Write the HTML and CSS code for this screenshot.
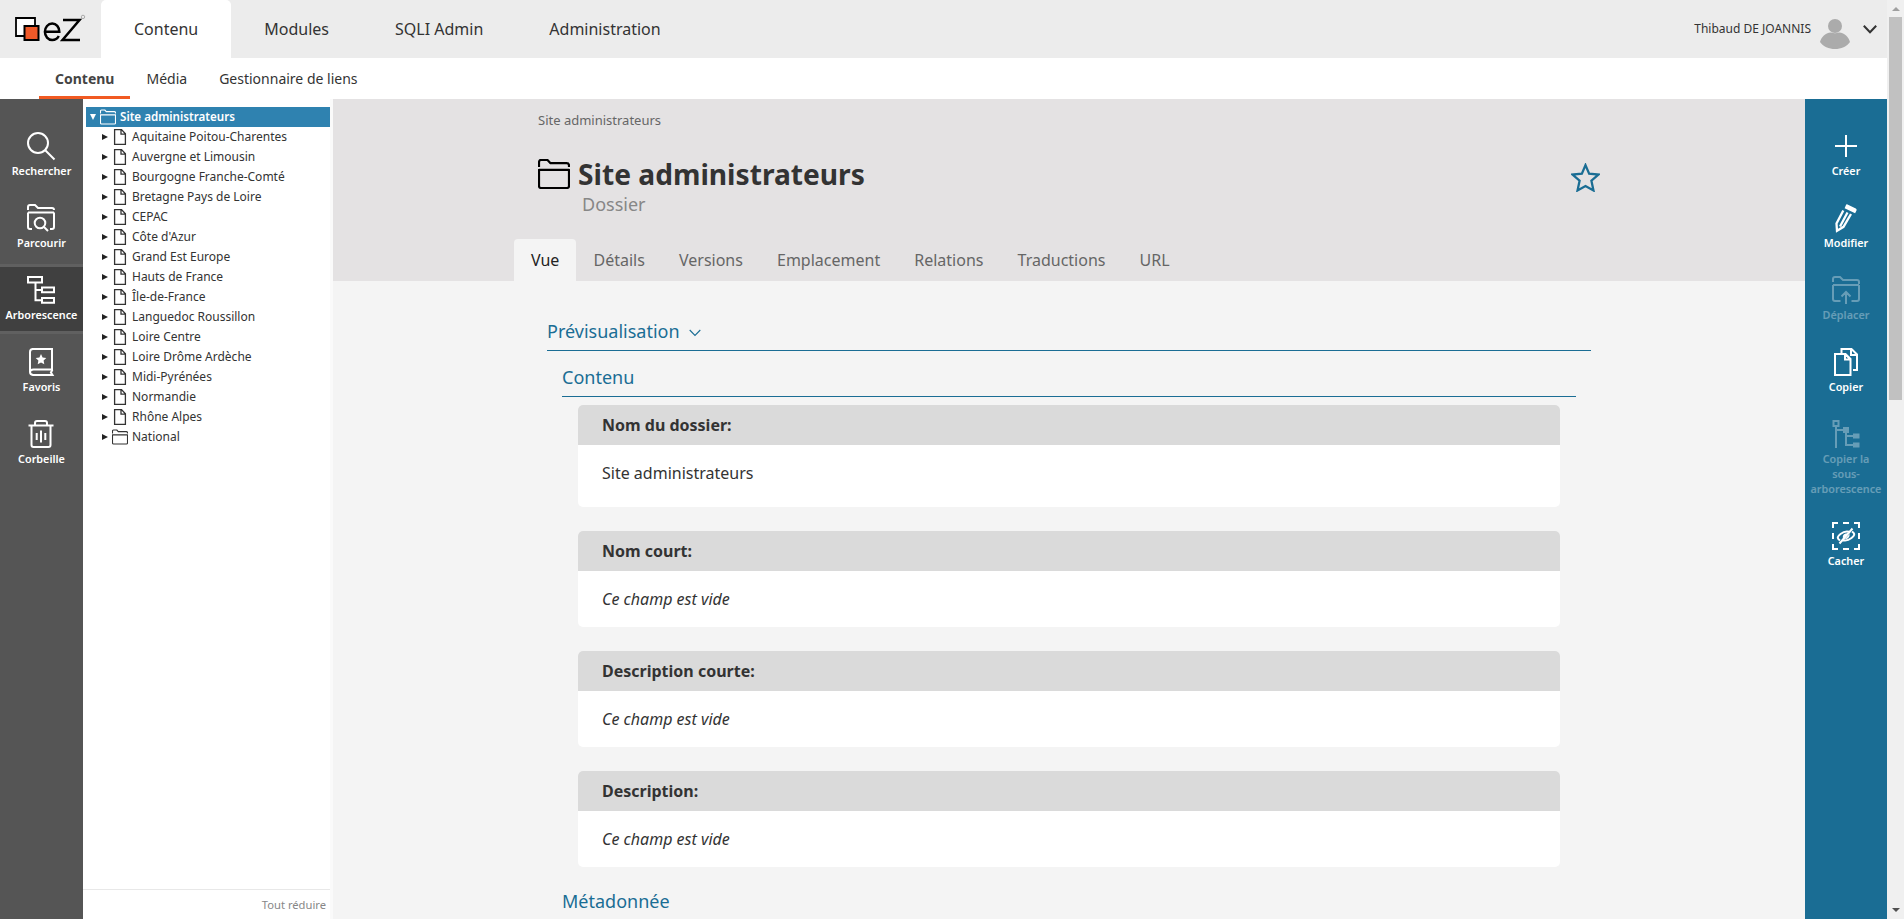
FILE: index.html
```html
<!DOCTYPE html>
<html lang="fr">
<head>
<meta charset="utf-8">
<title>Site administrateurs</title>
<link rel="stylesheet" href="styles.css">
</head>
<body>
<svg class="defs" aria-hidden="true">
  <symbol id="file" viewBox="0 0 12 16"><path d="M.6.6h6.900l3.900 4.100v10.700H.6zM7 .9v4.300h4.200" fill="none" stroke="currentColor" stroke-width="1.300"/></symbol>
  <symbol id="folder" viewBox="0 0 32 30"><path d="M1 8V3.500Q1 1 3 1h6.500l3 3.200H28.500Q31 4.200 31 6.500V8M1 10.800h30V27q0 2-2 2H3q-2 0-2-2z" fill="none" stroke="currentColor" stroke-width="2.200" stroke-linejoin="round"/></symbol>
</svg>
<div class="app">
  <div class="page">
    <header class="topbar">
      <svg class="logo" viewBox="0 0 72 30">
        <path d="M1 3h19v18H1z" fill="#fff" stroke="#000" stroke-width="1.800"/>
        <path d="M9.500 11h14v14H9.500z" fill="#f15a29" stroke="#000" stroke-width="2"/>
        <path d="M30 16.800h14.300c0-4.700-3-8.200-7.100-8.200s-7.300 3.600-7.300 8.200 3.200 8.200 7.300 8.200c3.100 0 5.300-1.500 6.600-4M48 5h16.500L47.500 25H65" fill="none" stroke="#000" stroke-width="2.500"/>
        <circle cx="68" cy="1.900" r="1.700" fill="none" stroke="#999" stroke-width=".8"/>
      </svg>
      <nav class="mainnav">
        <a class="on">Contenu</a><a>Modules</a><a>SQLI Admin</a><a>Administration</a>
      </nav>
      <div class="user">
        <span>Thibaud DE JOANNIS</span>
        <svg class="avatar" viewBox="0 0 30 30"><circle cx="15" cy="7" r="7" fill="#ababab"/><path d="M0 23c1-4 5-9.500 11-9.500q4 1.400 8 0c6 0 10 5.500 11 9.500-3 4.500-9 7-15 7S3 27.500 0 23z" fill="#ababab"/></svg>
        <svg class="chev" viewBox="0 0 14 9"><path d="M.8.8 7 7.300 13.200.8" fill="none" stroke="#333" stroke-width="2"/></svg>
      </div>
    </header>
    <nav class="subnav"><a class="on">Contenu</a><a>Média</a><a>Gestionnaire de liens</a></nav>
    <div class="columns">
      <aside class="side left">
        <a><svg viewBox="0 0 28 28"><circle cx="11" cy="11" r="10"/><path d="m18 18 9.500 9.500"/></svg>Rechercher</a>
        <a><svg viewBox="0 0 28 28"><path d="M1 6V3q0-2 2-2h5l3 3h14q2 0 2 2M1 8.500h26M5 25H3q-2 0-2-2V8.500M27 8.500V23q0 2-2 2h-2"/><circle cx="13" cy="19" r="5.300"/><path d="m17 23 4 4"/></svg>Parcourir</a>
        <a class="active"><svg viewBox="0 0 28 28"><path d="M1 1h14v5.500H1zM15 11.500h12v4.700H15zM15 22h12v4.700H15zM8.500 6.500v17.700H15M8.500 14H15"/></svg>Arborescence</a>
        <a><svg viewBox="0 0 28 28"><path d="M5 1h20v20.500H6.500Q3 21.500 3 24t3 3h19.500l-1.600-2.600 1.600-2.600M3 24V4q0-3 3-3"/><path class="solid" d="m14 6 1.600 3.400 3.700.5-2.700 2.600.7 3.700-3.300-1.800-3.300 1.800.7-3.700-2.700-2.600 3.700-.5z"/></svg>Favoris</a>
        <a><svg viewBox="0 0 28 28"><path d="M1.500 5.500h25M8 5V3q0-2 2-2h8q2 0 2 2v2M4.500 6v19q0 2 2 2h15q2 0 2-2V6M9.700 13v7M14 10.500v12M18.300 13v7"/></svg>Corbeille</a>
      </aside>
      <aside class="tree">
        <div class="root"><i class="down"></i><svg><use href="#folder"/></svg><span>Site administrateurs</span></div>
        <div class="node"><i></i><svg><use href="#file"/></svg><span>Aquitaine Poitou-Charentes</span></div>
        <div class="node"><i></i><svg><use href="#file"/></svg><span>Auvergne et Limousin</span></div>
        <div class="node"><i></i><svg><use href="#file"/></svg><span>Bourgogne Franche-Comté</span></div>
        <div class="node"><i></i><svg><use href="#file"/></svg><span>Bretagne Pays de Loire</span></div>
        <div class="node"><i></i><svg><use href="#file"/></svg><span>CEPAC</span></div>
        <div class="node"><i></i><svg><use href="#file"/></svg><span>Côte d'Azur</span></div>
        <div class="node"><i></i><svg><use href="#file"/></svg><span>Grand Est Europe</span></div>
        <div class="node"><i></i><svg><use href="#file"/></svg><span>Hauts de France</span></div>
        <div class="node"><i></i><svg><use href="#file"/></svg><span>Île-de-France</span></div>
        <div class="node"><i></i><svg><use href="#file"/></svg><span>Languedoc Roussillon</span></div>
        <div class="node"><i></i><svg><use href="#file"/></svg><span>Loire Centre</span></div>
        <div class="node"><i></i><svg><use href="#file"/></svg><span>Loire Drôme Ardèche</span></div>
        <div class="node"><i></i><svg><use href="#file"/></svg><span>Midi-Pyrénées</span></div>
        <div class="node"><i></i><svg><use href="#file"/></svg><span>Normandie</span></div>
        <div class="node"><i></i><svg><use href="#file"/></svg><span>Rhône Alpes</span></div>
        <div class="node"><i></i><svg><use href="#folder"/></svg><span>National</span></div>
        <div class="collapse">Tout réduire</div>
      </aside>
      <main>
        <div class="hero">
          <div class="crumb">Site administrateurs</div>
          <div class="heading">
            <svg class="bigfolder"><use href="#folder"/></svg>
            <h1>Site administrateurs</h1>
            <svg class="star" viewBox="0 0 28 28"><path d="m14 2 3.500 8.300 9 .8-6.800 6 2 9.400L14 22.200l-7.700 4.300 2-9.400-6.800-6 9-.8z" fill="none" stroke="#1a6d94" stroke-width="2.200"/></svg>
          </div>
          <div class="type">Dossier</div>
          <nav class="tabs"><a class="on">Vue</a><a>Détails</a><a>Versions</a><a>Emplacement</a><a>Relations</a><a>Traductions</a><a>URL</a></nav>
        </div>
        <div class="content">
          <h2>Prévisualisation <svg viewBox="0 0 12 8"><path d="m.7 1 5.300 5.500L11.300 1" fill="none" stroke="#1a6d94" stroke-width="1.100"/></svg></h2>
          <h3>Contenu</h3>
          <section class="card first"><h4>Nom du dossier:</h4><p>Site administrateurs</p></section>
          <section class="card"><h4>Nom court:</h4><p><em>Ce champ est vide</em></p></section>
          <section class="card"><h4>Description courte:</h4><p><em>Ce champ est vide</em></p></section>
          <section class="card"><h4>Description:</h4><p><em>Ce champ est vide</em></p></section>
          <h3 class="meta">Métadonnée</h3>
        </div>
      </main>
      <aside class="side right">
        <a><svg viewBox="0 0 28 28"><path d="M14 3v22M3 14h22"/></svg>Créer</a>
        <a><svg viewBox="0 0 28 28"><path class="solid" d="m15 .3 8.800 4.200q1.200.6.700 1.900l-1.400 2.800-10.500-5L14 1q.3-.9 1-.7z"/><path d="M11.300 6.500 4.500 19.500 5 26.800l6.500-4L19 10M15.500 8.500 8 22.500" stroke-width="2.300"/></svg>Modifier</a>
        <a class="off"><svg viewBox="0 0 28 28"><path d="M1 6V3q0-2 2-2h5l3 3h14q2 0 2 2v2M1 9h26M8.500 25H3q-2 0-2-2V9M27 9v14q0 2-2 2h-5.500M14 28V16.500M9.500 20.500l4.500-4.500 4.500 4.500"/></svg>Déplacer</a>
        <a><svg viewBox="0 0 28 28"><path d="M3 6h10.500l5 5v16H3zM13 6v5.500h5.500M9.500 6V1h10l5.500 5.500V22h-4M19 1v6h6M13 6l5.500 5.500"/></svg>Copier</a>
        <a class="off"><svg viewBox="0 0 28 28"><path d="M1.500 1h5v5h-5zM4 6v22M4 10h8M14 12v13h8M14 16h8"/><path class="solid" d="M11 7h6v6h-6zM21 13.500h6.500v5H21zM21 22.500h6.500v5H21z"/></svg>Copier la<br>sous-<br>arborescence</a>
        <a><svg viewBox="0 0 28 28"><path d="M1 6V1h5M11 1h6M22 1h5v5M27 11v6M27 22v5h-5M17 27h-6M6 27H1v-5M1 17v-6"/><path d="M8 18.300c-3.500-2-2.500-4 .5-6.300s6-2.800 8.500-2.200M20 9.700c3.500 2 2.500 4-.5 6.300s-6 2.800-8.500 2.200M20.500 6.500 7.500 21.500"/><path class="solid" d="M11 16.500c-.8-3.500 1.500-5.500 5-4.800zM17.500 12c.6 3-1.500 5.200-4.700 5z"/></svg>Cacher</a>
      </aside>
    </div>
  </div>
  <div class="scroll"><i class="up"></i><div class="thumb"></div><i class="dn"></i></div>
</div>
</body>
</html>
```
FILE: styles.css
```css
* { box-sizing: border-box; }
body { margin: 0; font-family: "Noto Sans", "Open Sans", sans-serif; font-size: 16px; color: #333; overflow: hidden; }
h1, h2, h3, h4, p { margin: 0; font-weight: 400; }
.defs { display: none; }
.app { display: flex; width: 1904px; height: 919px; overflow: hidden; }
.page { width: 1887px; display: flex; flex-direction: column; }

.topbar { height: 58px; flex: none; background: #ececec; display: flex; }
.logo { width: 72px; height: 30px; margin: 15px 14px 0 15px; flex: none; overflow: visible; }
.mainnav { display: flex; line-height: 58px; }
.mainnav a { padding: 0 33px; }
.mainnav .on { background: #fff; border-radius: 5px 5px 0 0; }
.user { margin-left: auto; display: flex; font-size: 12px; line-height: 57px; }
.avatar { width: 30px; height: 30px; margin: 19px 13px 0 9px; }
.chev { width: 14px; height: 9px; margin: 25px 10px 0 0; }

.subnav { height: 41px; flex: none; background: #fff; padding-left: 39px; display: flex; font-size: 14px; line-height: 42px; }
.subnav a { padding: 0 16px; }
.subnav .on { font-weight: 700; color: #444; border-bottom: 3px solid #f15a22; }

.columns { display: flex; height: 820px; }
.side { color: #fff; font-size: 10.800px; font-weight: 600; line-height: 15px; flex: none; text-align: center; }
.side a { display: block; padding: 4px 0 22px; }
.side svg { display: block; width: 28px; height: 28px; margin: 0 auto 3px; fill: none; stroke: #fff; stroke-width: 2; overflow: visible; }
.side .solid { fill: #fff; stroke: none; }
.side .off { opacity: .33; }
.left { width: 83px; background: #555; padding-top: 29px; }
.left a { height: 72px; }
.left svg { margin-left: 27px; }
.left .active { height: 70px; margin: -8px 0 10px; padding-top: 9px; background: #404040; border-top: 3px solid #606060; border-bottom: 3px solid #606060; }
.right { width: 82px; background: #1a6d94; padding-top: 29px; }

.tree { width: 250px; padding: 8px 0 0 3px; background: #fff; border-right: 3px solid #fafafa; flex: none; display: flex; flex-direction: column; font-size: 12px; line-height: 20px; }
.root, .node { height: 20px; display: flex; align-items: center; }
.root { background: #2f82b0; color: #fff; font-size: 11.600px; font-weight: 600; padding-left: 4px; }
.tree svg { width: 16px; height: 16px; margin: 0 4px; flex: none; }
.node { padding-left: 16px; }
.tree i { border-left: 6px solid #222; border-top: 3px solid transparent; border-bottom: 3px solid transparent; }
.tree .down { border-top: 6px solid #fff; border-left: 3px solid transparent; border-right: 3px solid transparent; border-bottom: 0; }
.collapse { margin: auto 0 0 -3px; height: 30px; border-top: 1px solid #e8e8e8; text-align: right; padding: 5px 4px 0; font-size: 11.200px; color: #878787; }

main { width: 1472px; flex: none; background: #f4f4f4; }
.hero { height: 182px; background: #e4e2e3; padding: 0 205px; display: flex; flex-direction: column; }
.crumb { font-size: 13px; line-height: 18px; padding-top: 12px; height: 59px; color: #666; }
.heading { display: flex; height: 34px; }
.bigfolder { width: 32px; height: 30px; color: #000; margin-top: 1px; }
h1 { font-size: 28.160px; line-height: 33px; font-weight: 700; margin-left: 8px; }
.star { width: 29px; height: 29px; margin: 5px 0 0 auto; }
.type { color: #878787; font-size: 18px; line-height: 24px; padding-left: 44px; }
.tabs { display: flex; margin: auto 0 0 -24px; height: 42px; line-height: 42px; color: #666; }
.tabs a { padding: 0 17.050px; }
.tabs .on { background: #f4f4f4; color: #222; border-radius: 4px 4px 0 0; }
.content { padding: 28px 214px 0; }
h2, h3 { color: #1a6d94; font-size: 18px; border-bottom: 1px solid #1a6d94; }
h2 { height: 42px; line-height: 45px; }
h2 svg { width: 12px; height: 8px; margin: 0 0 1px 5px; }
h3 { height: 46px; line-height: 52px; margin: 0 15px 8px; }
.card { margin: 0 31px 24px; background: #fff; border-radius: 5px; overflow: hidden; height: 96px; }
.card.first { height: 102px; }
h4 { height: 40px; line-height: 40px; background: #dadada; padding-left: 24px; font-weight: 700; }
.card p { padding-left: 24px; line-height: 56px; }
.meta { border: 0; line-height: 20px; }

.scroll { width: 17px; background: #f0f0f0; display: flex; flex-direction: column; align-items: center; }
.up { margin-top: 7px; border: 4px solid transparent; border-top: 0; border-bottom: 4px solid #a0a0a0; }
.thumb { width: 13px; height: 383px; margin-top: 6px; background: #c1c1c1; }
.dn { margin: auto 0 7px; border: 4px solid transparent; border-bottom: 0; border-top: 4px solid #505050; }
```
